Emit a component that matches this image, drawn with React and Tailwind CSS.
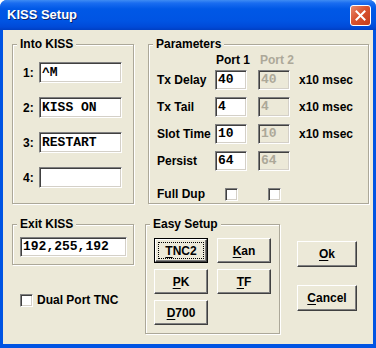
import React from 'react';

const ui = { fontFamily: '"Liberation Sans", Arial, sans-serif' };
const mono = { fontFamily: '"Liberation Mono", "Courier New", monospace' };

const sunken =
    'border border-t-[#808080] border-l-[#808080] border-b-white border-r-white shadow-[inset_1px_1px_0_#404040,inset_-1px_-1px_0_#d4d0c8]';

function Group({ label, className, children }) {
    return (
        <div className={`flex flex-col border border-[#aca899] shadow-[inset_1px_1px_0_#fff,1px_1px_0_#fff] ${className}`}>
            <span className="-mt-[8px] ml-[4px] w-fit bg-[#ece9d8] px-[3px] text-[12px] font-bold leading-[14px] text-black">
                {label}
            </span>
            {children}
        </div>
    );
}

function TextBox({ value, className = '', disabled }) {
    return (
        <div
            className={`flex items-center pl-[2px] text-[13px] font-bold ${sunken} ${disabled ? 'bg-[#ece9d8] text-[#aca899]' : 'bg-white text-black'} ${className}`}
            style={mono}
        >
            {value}
        </div>
    );
}

function CheckBox() {
    return <div className={`h-[13px] w-[13px] bg-white ${sunken}`} />;
}

function Button({ letter, rest, className = '', isDefault }) {
    return (
        <div className={`flex bg-[#ece9d8] ${isDefault ? 'border border-black' : ''} ${className}`}>
            <div className="flex flex-1 p-[2px] border border-t-white border-l-white border-b-[#404040] border-r-[#404040] shadow-[inset_-1px_-1px_0_#808080]">
                <div
                    className={`flex flex-1 items-center justify-center text-[12px] font-bold leading-[14px] ${isDefault ? 'border border-dotted border-black' : ''}`}
                >
                    <span>
                        <span className="underline underline-offset-[2px]">{letter}</span>
                        {rest}
                    </span>
                </div>
            </div>
        </div>
    );
}

const params = [
    { label: 'Tx Delay', v: '40', unit: true },
    { label: 'Tx Tail', v: '4', unit: true },
    { label: 'Slot Time', v: '10', unit: true },
    { label: 'Persist', v: '64', unit: false },
];

export default function App() {
    return (
        <div className="h-[348px] w-[376px] bg-white" style={ui}>
            <div className="flex h-full flex-col rounded-t-[7px] bg-[#0054e3]">
                {/* title bar */}
                <div className="flex h-[30px] items-center justify-between rounded-t-[7px] bg-[linear-gradient(to_bottom,#3f8cf3_0%,#1a6df0_10%,#0058e6_30%,#0054e3_70%,#004ad8_90%,#003fc3_100%)] pl-[7px] pr-[5px]">
                    <span className="text-[13px] font-bold text-white [text-shadow:1px_1px_0_#0a246a]">KISS Setup</span>
                    <div className="flex h-[21px] w-[21px] items-center justify-center rounded-[3px] border border-white bg-[linear-gradient(135deg,#e88a6e_0%,#d9532f_45%,#c43c1a_100%)]">
                        <svg width="11" height="11" viewBox="0 0 11 11">
                            <path d="M1.5 1.5 L9.5 9.5 M9.5 1.5 L1.5 9.5" stroke="white" strokeWidth="2" strokeLinecap="square" />
                        </svg>
                    </div>
                </div>

                {/* client area */}
                <div className="mx-[3px] mb-[4px] flex flex-1 flex-col bg-[#ece9d8] pl-[9px] pt-[14px] text-black">
                    <div className="flex gap-[14px]">
                        <Group label="Into KISS" className="h-[160px] w-[122px]">
                            <div className="mt-[11px] flex flex-col gap-[14px] pl-[10px]">
                                {['^M', 'KISS ON', 'RESTART', ''].map((v, i) => (
                                    <div key={i} className="flex items-center">
                                        <span className="w-[16px] text-[12px] font-bold">{i + 1}:</span>
                                        <TextBox value={v} className="h-[21px] w-[83px]" />
                                    </div>
                                ))}
                            </div>
                        </Group>

                        <Group label="Parameters" className="h-[160px] w-[221px]">
                            <div className="mt-[2px] flex pl-[67px] text-[12px] font-bold leading-[14px]">
                                <span className="w-[44px]">Port 1</span>
                                <span className="text-[#aca899]">Port 2</span>
                            </div>
                            <div className="mt-[3px] flex flex-col gap-[7px] pl-[8px]">
                                {params.map((p) => (
                                    <div key={p.label} className="flex h-[20px] items-center">
                                        <span className="w-[58px] text-[12px] font-bold">{p.label}</span>
                                        <TextBox value={p.v} className="h-[20px] w-[32px]" />
                                        <TextBox value={p.v} disabled className="ml-[11px] h-[20px] w-[32px]" />
                                        {p.unit && <span className="ml-[9px] text-[12px] font-bold">x10 msec</span>}
                                    </div>
                                ))}
                                <div className="mt-[7px] flex items-center">
                                    <span className="w-[68px] text-[12px] font-bold">Full Dup</span>
                                    <CheckBox />
                                    <div className="ml-[30px]">
                                        <CheckBox />
                                    </div>
                                </div>
                            </div>
                        </Group>
                    </div>

                    <div className="mt-[20px] flex">
                        <div className="flex w-[122px] flex-col">
                            <Group label="Exit KISS" className="h-[41px] w-[122px]">
                                <div className="mt-[6px] pl-[7px]">
                                    <TextBox value="192,255,192" className="h-[20px] w-[107px]" />
                                </div>
                            </Group>
                            <div className="mt-[26px] flex items-center gap-[4px] pl-[8px]">
                                <CheckBox />
                                <span className="text-[12px] font-bold">Dual Port TNC</span>
                            </div>
                        </div>

                        <Group label="Easy Setup" className="ml-[11px] h-[110px] w-[135px]">
                            <div className="mt-[7px] grid grid-cols-[54px_54px] gap-x-[9px] gap-y-[6px] pl-[8px]">
                                <Button letter="T" rest="NC2" isDefault className="h-[25px]" />
                                <Button letter="K" rest="an" className="h-[25px]" />
                                <Button letter="P" rest="K" className="h-[25px]" />
                                <Button letter="T" rest="F" className="h-[25px]" />
                                <Button letter="D" rest="700" className="h-[25px]" />
                            </div>
                        </Group>

                        <div className="ml-[17px] mt-[17px] flex flex-col gap-[18px]">
                            <Button letter="O" rest="k" className="h-[26px] w-[60px]" />
                            <Button letter="C" rest="ancel" className="h-[26px] w-[60px]" />
                        </div>
                    </div>
                </div>
            </div>
        </div>
    );
}
